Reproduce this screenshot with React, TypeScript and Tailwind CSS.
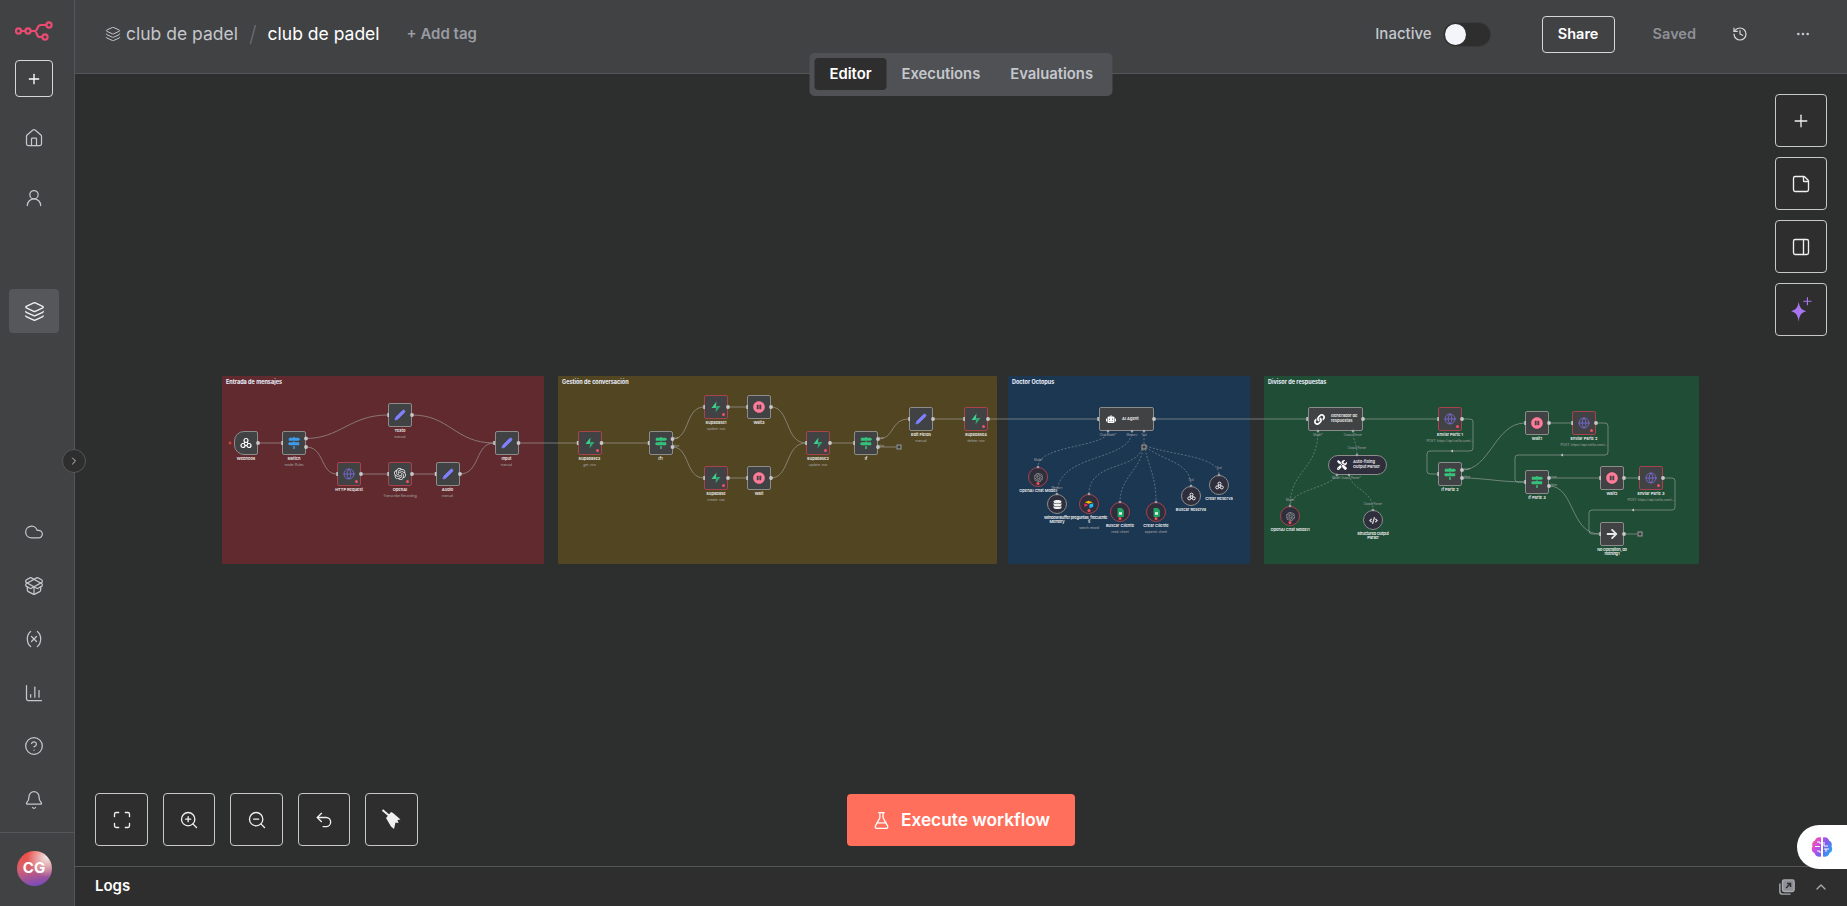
import React from 'react';
import {
  Bell, ChartColumn, ChevronRight, ChevronUp, CircleHelp, Cloud, Ellipsis, FlaskConical, Globe, History, House,
  Layers, Maximize, PackageOpen, PanelRight, Pen, Plus, StickyNote, Undo2, UserRound, Variable, ZoomIn, ZoomOut,
} from 'lucide-react';
import { FaArrowRight, FaCode, FaDatabase, FaLink, FaMapSigns, FaPauseCircle, FaRobot, FaTools } from 'react-icons/fa';
import { SiOpenai } from 'react-icons/si';

type NodeIcon =
  | 'webhook' | 'switch' | 'if' | 'pen' | 'globe' | 'openai' | 'supabase' | 'wait' | 'robot' | 'link'
  | 'db' | 'sheet' | 'airtable' | 'tools' | 'code' | 'noop' | 'webhookWhite';

interface FlowNode {
  x: number;
  y: number;
  icon: NodeIcon;
  label: string;
  sub?: string;
  error?: boolean;
  kind?: 'box' | 'trigger' | 'circle';
  labelWidth?: number;
}

const groups = [
  { title: 'Entrada de mensajes', x: 222, w: 322, color: '#602a2e' },
  { title: 'Gestión de conversación', x: 558, w: 439, color: '#524521' },
  { title: 'Doctor Octopus', x: 1008, w: 242, color: '#1c3751' },
  { title: 'Divisor de respuestas', x: 1264, w: 435, color: '#1f4d36' },
];

const nodes: FlowNode[] = [
  { x: 246, y: 443, icon: 'webhook', label: 'Webhook', kind: 'trigger' },
  { x: 294, y: 443, icon: 'switch', label: 'Switch', sub: 'mode: Rules' },
  { x: 400, y: 415, icon: 'pen', label: 'Texto', sub: 'manual' },
  { x: 349, y: 474, icon: 'globe', label: 'HTTP Request', error: true },
  { x: 400, y: 474, icon: 'openai', label: 'OpenAI', sub: 'Transcribe Recording', error: true },
  { x: 447.5, y: 474, icon: 'pen', label: 'Audio', sub: 'manual' },
  { x: 506.5, y: 443, icon: 'pen', label: 'Input', sub: 'manual' },
  { x: 589.5, y: 443, icon: 'supabase', label: 'Supabase3', sub: 'get: row', error: true },
  { x: 660.5, y: 443, icon: 'if', label: 'If1' },
  { x: 716, y: 407, icon: 'supabase', label: 'Supabase1', sub: 'update: row', error: true },
  { x: 759, y: 407, icon: 'wait', label: 'Wait3' },
  { x: 716, y: 478, icon: 'supabase', label: 'Supabase', sub: 'create: row', error: true },
  { x: 759, y: 478, icon: 'wait', label: 'Wait' },
  { x: 818, y: 443, icon: 'supabase', label: 'Supabase2', sub: 'update: row', error: true },
  { x: 866, y: 443, icon: 'if', label: 'If' },
  { x: 921, y: 419, icon: 'pen', label: 'Edit Fields', sub: 'manual' },
  { x: 976, y: 419, icon: 'supabase', label: 'Supabase4', sub: 'delete: row', error: true },
  { x: 1038, y: 477, icon: 'openai', label: 'OpenAI Chat Model', kind: 'circle', error: true },
  { x: 1057, y: 504, icon: 'db', label: 'Window Buffer Memory', kind: 'circle', labelWidth: 30 },
  { x: 1089, y: 504, icon: 'airtable', label: 'preguntas_frecuentes', sub: 'search: record', kind: 'circle', error: true, labelWidth: 38 },
  { x: 1120, y: 512, icon: 'sheet', label: 'Buscar Cliente', sub: 'read: sheet', kind: 'circle', error: true },
  { x: 1156, y: 512, icon: 'sheet', label: 'Crear Cliente', sub: 'append: sheet', kind: 'circle', error: true },
  { x: 1191, y: 496, icon: 'webhookWhite', label: 'Buscar Reserva', kind: 'circle' },
  { x: 1219, y: 485, icon: 'webhookWhite', label: 'Crear Reserva', kind: 'circle' },
  { x: 1290, y: 516, icon: 'openai', label: 'OpenAI Chat Model1', kind: 'circle', error: true },
  { x: 1373, y: 520, icon: 'code', label: 'Structured Output Parser', kind: 'circle', labelWidth: 36 },
  { x: 1450, y: 419, icon: 'globe', label: 'Enviar Parte 1', sub: 'POST: https://api.twilio.com/...', error: true },
  { x: 1450, y: 474, icon: 'if', label: 'If Parte 2' },
  { x: 1537, y: 423, icon: 'wait', label: 'Wait1' },
  { x: 1584, y: 423, icon: 'globe', label: 'Enviar Parte 2', sub: 'POST: https://api.twilio.com/...', error: true },
  { x: 1537, y: 482, icon: 'if', label: 'If Parte 3' },
  { x: 1612, y: 478, icon: 'wait', label: 'Wait2' },
  { x: 1651, y: 478, icon: 'globe', label: 'Enviar Parte 3', sub: 'POST: https://api.twilio.com/...', error: true },
  { x: 1612, y: 534, icon: 'noop', label: 'No Operation, do nothing1', labelWidth: 40 },
];

const edges = [
  'M258 443H282',
  'M306 438.5C340 438.5 350 415 388 415',
  'M306 447C325 447 320 474 337 474',
  'M361 474H388',
  'M412 474H435.5',
  'M412 415C450 415 455 443 494 443',
  'M460 474C480 474 475 443 494 443',
  'M518.5 443H577.5',
  'M601.5 443H648.5',
  'M672.5 439C690 439 685 407 704 407',
  'M672.5 447C690 447 685 478 704 478',
  'M728 407H747',
  'M728 478H747',
  'M771 407C790 407 785 443 806 443',
  'M771 478C790 478 785 443 806 443',
  'M830 443H854',
  'M878 439C895 439 890 419 909 419',
  'M878 447H896',
  'M933 419H964',
  'M988 419H1098',
  'M1154 419H1307',
  'M1363 419H1438',
  'M1462 419H1470Q1473 419 1473 422V448Q1473 451 1470 451H1430Q1427 451 1427 454V471Q1427 474 1430 474H1438',
  'M1462 470C1490 470 1495 423 1525 423',
  'M1462 478C1485 478 1500 482 1525 482',
  'M1549 423H1572',
  'M1596 423H1605Q1608 423 1608 426V452Q1608 455 1605 455H1518Q1515 455 1515 458V479Q1515 482 1518 482H1525',
  'M1549 478H1600',
  'M1549 486C1575 486 1570 534 1600 534',
  'M1624 478H1639',
  'M1663 478H1672Q1675 478 1675 481V507Q1675 510 1672 510H1592Q1589 510 1589 513V531Q1589 534 1592 534H1600',
  'M1624 534H1637',
];

const dashed = [
  'M1108 431C1108 448 1038 444 1038 467',
  'M1132 431C1132 462 1057 452 1057 494',
  'M1144 431V445',
  'M1142 449C1135 470 1089 462 1089 494',
  'M1143 449C1140 470 1120 478 1120 502',
  'M1145 449C1150 470 1156 478 1156 502',
  'M1146 447C1165 462 1191 462 1191 486',
  'M1146 446C1175 456 1219 456 1219 475',
  'M1318 431C1318 470 1290 470 1290 506',
  'M1353 431C1353 442 1357 442 1357 455',
  'M1337 475C1330 488 1290 490 1290 506',
  'M1349 475C1352 490 1373 490 1373 510',
];

const outPorts = [
  [258, 443], [306, 438.5], [306, 447], [361, 474], [412, 474], [412, 415], [460, 474], [518.5, 443], [601.5, 443],
  [672.5, 439], [672.5, 447], [728, 407], [728, 478], [771, 407], [771, 478], [830, 443], [878, 439], [878, 447],
  [933, 419], [988, 419], [1154, 419], [1363, 419], [1462, 419], [1462, 470], [1462, 478], [1549, 423], [1596, 423],
  [1549, 478], [1549, 486], [1624, 478], [1663, 478], [1624, 534],
];

const inPorts = [
  [282, 443], [388, 415], [337, 474], [388, 474], [435.5, 474], [494, 443], [577.5, 443], [648.5, 443], [704, 407],
  [704, 478], [747, 407], [747, 478], [806, 443], [854, 443], [909, 419], [964, 419], [1098, 419], [1307, 419],
  [1438, 419], [1438, 474], [1525, 423], [1525, 482], [1572, 423], [1600, 478], [1639, 478], [1600, 534],
];

const diamonds = [
  [1108, 431], [1132, 431], [1144, 431], [1038, 467], [1057, 494], [1089, 494], [1120, 502], [1156, 502], [1191, 486],
  [1219, 475], [1318, 431], [1353, 431], [1357, 455], [1337, 475], [1349, 475], [1290, 506], [1373, 510],
];

const portLabels: [number, number, string][] = [
  [1108, 436, 'Chat Model*'], [1132, 436, 'Memory'], [1144, 436, 'Tool'], [1038, 461, 'Model'], [1057, 489, 'Memory'],
  [1191, 481, 'Tool'], [1219, 469, 'Tool'], [1318, 436, 'Model*'], [1353, 436, 'Output Parser'], [1357, 449, 'Output Parser'],
  [1336, 479, 'Model'], [1351, 479, 'Output Parser*'], [1290, 501, 'Model'], [1373, 505, 'Output Parser'],
  [881, 439, 'true'], [881, 447, 'false'], [676, 439, 'true'], [676, 447, 'false'], [1467, 470, 'true'],
  [1467, 478, 'false'], [1554, 478, 'true'], [1554, 486, 'false'],
];

function SupabaseBolt() {
  return (
    <svg viewBox="0 0 24 24" className="size-[12px]">
      <path d="M13 1 3 14h8.5z" fill="#3ecf8e" />
      <path d="M11 23l10-13h-8.5z" fill="#2fa873" />
    </svg>
  );
}

function WebhookDots({ size }: { size: number }) {
  return (
    <svg viewBox="0 0 24 24" width={size} height={size} fill="none" stroke="#fff" strokeWidth="2.4">
      <circle cx="12" cy="7" r="4" />
      <circle cx="6" cy="17" r="4" />
      <circle cx="18" cy="17" r="4" />
      <path d="M10 10 7.5 14M14 10l2.5 4M10 17h4" />
    </svg>
  );
}

function Glyph({ icon, circle }: { icon: NodeIcon; circle?: boolean }) {
  const s = circle ? 9 : 12;
  switch (icon) {
    case 'webhook':
      return <WebhookDots size={12} />;
    case 'webhookWhite':
      return <WebhookDots size={9} />;
    case 'switch':
      return <FaMapSigns size={s} color="#3d9be9" />;
    case 'if':
      return <FaMapSigns size={s} color="#35c27a" />;
    case 'pen':
      return <Pen size={s} color="#8080ff" fill="#8080ff" strokeWidth={1.5} />;
    case 'globe':
      return <Globe size={s} color="#7b6fe0" strokeWidth={1.6} />;
    case 'openai':
      return <SiOpenai size={s} color={circle ? '#a0a0a0' : '#e8e8e8'} />;
    case 'supabase':
      return <SupabaseBolt />;
    case 'wait':
      return <FaPauseCircle size={s} color="#ff7b98" />;
    case 'robot':
      return <FaRobot size={10} color="#fff" />;
    case 'link':
      return <FaLink size={11} color="#fff" />;
    case 'db':
      return <FaDatabase size={s} color="#f0f0f0" />;
    case 'sheet':
      return (
        <svg viewBox="0 0 18 24" width="7" height="9">
          <path d="M1 2a2 2 0 0 1 2-2h9l6 6v16a2 2 0 0 1-2 2H3a2 2 0 0 1-2-2z" fill="#20a464" />
          <rect x="5" y="11" width="8" height="7" fill="#d8f2e4" />
        </svg>
      );
    case 'airtable':
      return (
        <svg viewBox="0 0 24 20" width="10" height="9">
          <path d="M11 1 2 4.5l9 3.5 10-3.5z" fill="#fcb400" />
          <path d="M13 10v9l9-3.5V7z" fill="#18bfff" />
          <path d="M1 7v9l9-5z" fill="#f82b60" />
        </svg>
      );
    case 'tools':
      return <FaTools size={10} color="#fff" />;
    case 'code':
      return <FaCode size={s} color="#e0e0e0" />;
    case 'noop':
      return <FaArrowRight size={s} color="#e8e8e8" />;
  }
}

function NodeCard({ node }: { node: FlowNode }) {
  const circle = node.kind === 'circle';
  const size = circle ? 20 : 24;
  return (
    <div className="absolute" style={{ left: node.x - size / 2, top: node.y - size / 2, width: size, height: size }}>
      <div
        className={`relative flex size-full items-center justify-center border-[0.7px] ${
          circle ? 'rounded-full bg-[#2e2e3c]' : 'bg-[#414244]'
        } ${node.kind === 'trigger' ? 'rounded-l-[10px] rounded-r-[2px]' : circle ? '' : 'rounded-[2px]'} ${
          node.error ? 'border-[#a8424c]' : 'border-[#8c8c8c]'
        }`}
      >
        <Glyph icon={node.icon} circle={circle} />
        {node.error && (
          <span
            className={`absolute size-[3px] rounded-full bg-[#f0525f] ${
              circle ? 'bottom-[1px] left-1/2 -translate-x-1/2' : 'bottom-[2px] right-[2px]'
            }`}
          />
        )}
      </div>
      <div
        className={`absolute left-1/2 top-full mt-[1.5px] -translate-x-1/2 text-center leading-[4.6px] ${
          node.labelWidth ? 'tracking-[-0.2px]' : ''
        }`}
        style={{ width: node.labelWidth ?? 48 }}
      >
        <div className="text-[4px] font-semibold text-[#f0f0f0] [overflow-wrap:anywhere]">{node.label}</div>
        {node.sub && <div className="mt-[1.6px] whitespace-nowrap text-[3.3px] text-[#a8a8a8]">{node.sub}</div>}
      </div>
    </div>
  );
}

function WideNode({ x, y, w, icon, label, pill }: { x: number; y: number; w: number; icon: NodeIcon; label: string; pill?: boolean }) {
  return (
    <div
      className={`absolute flex items-center gap-[5px] border-[0.7px] border-[#8c8c8c] pr-[2px] ${
        pill ? 'h-[20px] rounded-full bg-[#2e2e3c] pl-[6px]' : 'h-[24px] rounded-[2px] bg-[#414244] pl-[4px]'
      }`}
      style={{ left: x, top: y, width: w }}
    >
      <span className="flex w-[13px] shrink-0 justify-center">
        <Glyph icon={icon} />
      </span>
      <span className="text-[4px] font-semibold leading-[4.8px] text-[#f0f0f0]">{label}</span>
    </div>
  );
}

function Diagram() {
  return (
    <div className="absolute left-[-75px] top-[-74px] h-[906px] w-[1847px]">
      {groups.map((g) => (
        <div
          key={g.title}
          className="absolute top-[376px] h-[188px] rounded-[1px] px-[4px] py-[3px] text-[5.5px] font-bold leading-[7px] text-[#eef2ff]"
          style={{ left: g.x, width: g.w, backgroundColor: g.color }}
        >
          {g.title}
        </div>
      ))}
      <svg viewBox="0 0 1847 906" className="absolute inset-0 size-full" fill="none">
        {edges.map((d) => (
          <path key={d} d={d} stroke="#a8a8a8" strokeOpacity="0.75" strokeWidth="0.8" />
        ))}
        {dashed.map((d) => (
          <path key={d} d={d} stroke="#8f98a4" strokeOpacity="0.7" strokeWidth="0.8" strokeDasharray="2 1.6" />
        ))}
      </svg>
      {nodes.map((n) => (
        <NodeCard key={n.label} node={n} />
      ))}
      <WideNode x={1099} y={407} w={55} icon="robot" label="AI Agent" />
      <WideNode x={1308} y={407} w={55} icon="link" label="Generador de respuestas" />
      <WideNode x={1328} y={455} w={59} icon="tools" label="Auto-fixing Output Parser" pill />
      {[[899, 447], [1640, 534], [1144, 447]].map(([x, y]) => (
        <div
          key={x}
          className="absolute size-[5px] -translate-x-1/2 -translate-y-1/2 border-[0.7px] border-[#a0a0a0] bg-[#3a3a3a]"
          style={{ left: x, top: y }}
        />
      ))}
      <svg viewBox="0 0 1847 906" className="absolute inset-0 size-full" fill="none">
        {outPorts.map(([x, y]) => (
          <circle key={`${x}-${y}`} cx={x} cy={y} r="1.9" fill="#c8c8c8" />
        ))}
        {inPorts.map(([x, y]) => (
          <rect key={`${x}-${y}`} x={x - 0.7} y={y - 2} width="1.6" height="4" fill="#c8c8c8" />
        ))}
        {diamonds.map(([x, y]) => (
          <path key={`${x}-${y}`} d={`M${x} ${y - 1.6}l1.6 1.6l-1.6 1.6l-1.6-1.6z`} fill="#a8a8b0" />
        ))}
        <path d="M1453 449.5v3l-2.4-1.5zM1563 453.5v3l-2.4-1.5zM1634 508.5v3l-2.4-1.5z" fill="#c8c8c8" />
        <path d="M228.5 443h3M230 441.5v3" stroke="#e0503c" strokeWidth="1" />
        {portLabels.map(([x, y, t]) => (
          <text key={`${x}-${y}`} x={x} y={y} textAnchor="middle" fontSize="2.8" fill="#a8a8b0" fontFamily="Inter, sans-serif">
            {t}
          </text>
        ))}
      </svg>
    </div>
  );
}

function CanvasButton({ children, className = '' }: { children: React.ReactNode; className?: string }) {
  return (
    <div className={`flex h-[53px] items-center justify-center rounded-[4px] border border-[#c8c8c8] bg-[#2e2e2e] text-[#f0f0f0] ${className}`}>
      {children}
    </div>
  );
}

function SideIcon({ children, className = '' }: { children: React.ReactNode; className?: string }) {
  return <div className={`flex h-[24px] items-center justify-center text-[#c4c7cc] ${className}`}>{children}</div>;
}

export default function App() {
  return (
    <div className="relative flex h-screen w-full overflow-hidden bg-[#2e2e2e] font-['Inter',sans-serif] text-white">
      <aside className="flex w-[75px] shrink-0 flex-col items-center border-r border-[#55565a] bg-[#414244] pr-[6px]">
        <svg viewBox="0 0 38 20" fill="none" stroke="#ea4b71" strokeWidth="2.2" className="mt-[21px] h-[20px] w-[38px]">
          <circle cx="3.5" cy="10" r="2.6" />
          <circle cx="13" cy="10" r="2.6" />
          <circle cx="34" cy="4" r="2.6" />
          <circle cx="30" cy="16" r="2.6" />
          <path d="M6 10h4.5M15.5 10h4c2 0 2.5-1.5 3-3s1-3 3.5-3h5.4M19.5 10c2.5 0 2 6 5 6h2.5" />
        </svg>
        <div className="mt-[19px] flex h-[37px] w-[38px] items-center justify-center rounded-[4px] border border-[#d8d8d8]">
          <Plus size={16} />
        </div>
        <SideIcon className="mt-[29px]"><House size={20} strokeWidth={1.5} /></SideIcon>
        <SideIcon className="mt-[36px]"><UserRound size={20} strokeWidth={1.5} /></SideIcon>
        <div className="mt-[79px] flex h-[44px] w-[50px] items-center justify-center rounded-[4px] bg-[#56575a] text-[#f0f0f0]">
          <Layers size={21} strokeWidth={1.5} />
        </div>
        <div className="mt-auto flex flex-col items-center gap-[29.6px]">
          <SideIcon><Cloud size={20} strokeWidth={1.5} /></SideIcon>
          <SideIcon><PackageOpen size={20} strokeWidth={1.5} /></SideIcon>
          <SideIcon><Variable size={20} strokeWidth={1.5} /></SideIcon>
          <SideIcon><ChartColumn size={20} strokeWidth={1.5} /></SideIcon>
          <SideIcon><CircleHelp size={20} strokeWidth={1.5} /></SideIcon>
          <SideIcon><Bell size={20} strokeWidth={1.5} /></SideIcon>
        </div>
        <div className="-mr-[6px] mt-[20px] flex h-[74px] w-[74px] items-start justify-center border-t border-[#55565a] pr-[6px] pt-[18px]">
          <div className="flex size-[35px] items-center justify-center rounded-full bg-[radial-gradient(circle_at_85%_18%,#efe8e8_0%,rgba(239,232,232,0)_48%),linear-gradient(170deg,#f5483c_0%,#d8606a_45%,#6a48c8_100%)] text-[15px] font-bold">
            CG
          </div>
        </div>
      </aside>

      <main className="flex min-w-0 flex-1 flex-col">
        <header className="relative flex h-[74px] shrink-0 items-center border-b border-[#55565a] bg-[#414244] pb-[5px] pl-[30px] pr-[36px]">
          <Layers size={16} strokeWidth={1.5} className="text-[#c4c7cc]" />
          <span className="ml-[5px] text-[17.5px] text-[#c4c7cc]">club de padel</span>
          <span className="mx-[11px] text-[22px] font-light text-[#6a6b6f]">/</span>
          <span className="text-[17.5px] text-white">club de padel</span>
          <span className="ml-[27px] text-[15px] font-semibold text-[#9a9ca3]">+ Add tag</span>
          <div className="ml-auto flex items-center">
            <span className="text-[15px] font-medium text-[#c4c7cc]">Inactive</span>
            <div className="ml-[11px] flex h-[25px] w-[48px] items-center rounded-full border border-[#3a3a3a] bg-[#2e2e2e] pl-[1px]">
              <span className="size-[21px] rounded-full bg-[#f4f4fb]" />
            </div>
            <div className="ml-[51px] flex h-[37px] w-[73px] items-center justify-center rounded-[4px] border border-[#d8d8d8] text-[14.5px] font-semibold">
              Share
            </div>
            <span className="ml-[38px] text-[14.5px] font-semibold text-[#8f9197]">Saved</span>
            <History size={16} strokeWidth={1.8} className="ml-[36px] text-[#d8d8d8]" />
            <Ellipsis size={16} className="ml-[47px] text-[#c4c7cc]" />
          </div>
          <div className="absolute left-1/2 top-[53px] z-10 flex h-[43px] w-[303px] -translate-x-1/2 items-center rounded-[5px] bg-[#505154] pb-[1px] pl-[5px] text-[14.8px] font-semibold text-[#c4c7cc]">
            <div className="flex h-[32px] w-[72px] items-center justify-center rounded-[4px] bg-[#2e2e2e] text-white">Editor</div>
            <span className="ml-[15px]">Executions</span>
            <span className="ml-[30px]">Evaluations</span>
          </div>
        </header>

        <section className="relative min-h-0 flex-1 overflow-hidden bg-[#2d2e2e] bg-[radial-gradient(#3b3c3c_0.6px,transparent_0.7px)] bg-[size:4px_4px]">
          <Diagram />
          <div className="absolute right-[20px] top-[20px] flex w-[52px] flex-col gap-[10px]">
            <CanvasButton><Plus size={20} strokeWidth={1.6} /></CanvasButton>
            <CanvasButton><StickyNote size={20} strokeWidth={1.6} /></CanvasButton>
            <CanvasButton><PanelRight size={20} strokeWidth={1.6} /></CanvasButton>
            <CanvasButton>
              <svg viewBox="0 0 24 24" width="28" height="28" fill="#a974f0">
                <path d="M10 5c.8 5 2.5 7 6.5 8-4 1-5.700 3-6.5 9-.8-6-2.5-8-6.5-9 4-1 5.700-3 6.5-8z" />
                <path d="M17 1h1v3h3v1h-3v3h-1V5h-3V4h3z" />
              </svg>
            </CanvasButton>
          </div>
          <div className="absolute bottom-[20px] left-[20px] flex gap-[15px]">
            <CanvasButton className="w-[53px]"><Maximize size={20} strokeWidth={1.6} /></CanvasButton>
            <CanvasButton className="w-[52px]"><ZoomIn size={20} strokeWidth={1.6} /></CanvasButton>
            <CanvasButton className="w-[53px]"><ZoomOut size={20} strokeWidth={1.6} /></CanvasButton>
            <CanvasButton className="w-[52px]"><Undo2 size={20} strokeWidth={1.6} /></CanvasButton>
            <CanvasButton className="w-[53px]">
              <svg viewBox="0 0 24 24" width="24" height="24" fill="#f0f0f0">
                <path d="M2.5 2 9.5 8" stroke="#f0f0f0" strokeWidth="2" />
                <path d="M6 10 11 4l2 1 7.500 6.500-3 .5 1 3-3-.5-1.500 6.500-3-2.500z" />
              </svg>
            </CanvasButton>
          </div>
          <div className="absolute bottom-[20px] left-[772px] flex h-[52px] w-[228px] items-center justify-center gap-[10px] rounded-[4px] bg-[#ff6f5c] text-[17.3px] font-semibold">
            <FlaskConical size={19} strokeWidth={1.6} />
            Execute workflow
          </div>
        </section>

        <footer className="flex h-[40px] shrink-0 items-center border-t border-[#55565a] bg-[#2e2e2e] pl-[20px] pr-[18px]">
          <span className="text-[15px] font-semibold">Logs</span>
          <div className="ml-auto flex items-center gap-[18px] text-[#a8aab0]">
            <svg viewBox="0 0 18 18" width="16" height="16" fill="none" stroke="currentColor" strokeWidth="1.6">
              <rect x="4" y="1" width="13" height="13" rx="2" fill="#8e9097" />
              <path d="M1 5v9a3 3 0 0 0 3 3h9" />
              <path d="M8 10l5-5M9 5h4v4" stroke="#2e2e2e" />
            </svg>
            <ChevronUp size={16} />
          </div>
        </footer>
      </main>

      <div className="absolute left-[62px] top-[449px] flex size-[24px] items-center justify-center rounded-full border border-[#55565a] bg-[#2e2e2e] text-[#c4c7cc]">
        <ChevronRight size={12} />
      </div>

      <div className="absolute right-0 top-[825px] flex h-[44px] w-[50px] items-center justify-start rounded-l-[22px] bg-white pl-[13px]">
        <svg viewBox="0 0 24 24" width="24" height="24">
          <defs>
            <linearGradient id="brainFill" x1="0" y1="0" x2="1" y2="0.6">
              <stop offset="0" stopColor="#f8627a" />
              <stop offset="0.35" stopColor="#d84cd8" />
              <stop offset="0.65" stopColor="#7f5cf0" />
              <stop offset="1" stopColor="#2f9cf5" />
            </linearGradient>
          </defs>
          <path
            d="M11 2.5C8 1.5 5.5 3 5 5.5 2.5 6.5 1.5 9 2.5 11.5 1 14 2 17 4.5 18 5 20.5 8 22.5 11 21.5zM13 2.5C16 1.5 18.5 3 19 5.5 21.5 6.5 22.5 9 21.5 11.5 23 14 22 17 19.5 18 19 20.5 16 22.5 13 21.5z"
            fill="url(#brainFill)"
          />
          <path d="M5 11.5h5M7 7h3v2M7 16h3v2M14 7v4h4M14 14h5M16 14v3" fill="none" stroke="#fff" strokeWidth="1" />
        </svg>
      </div>
    </div>
  );
}
